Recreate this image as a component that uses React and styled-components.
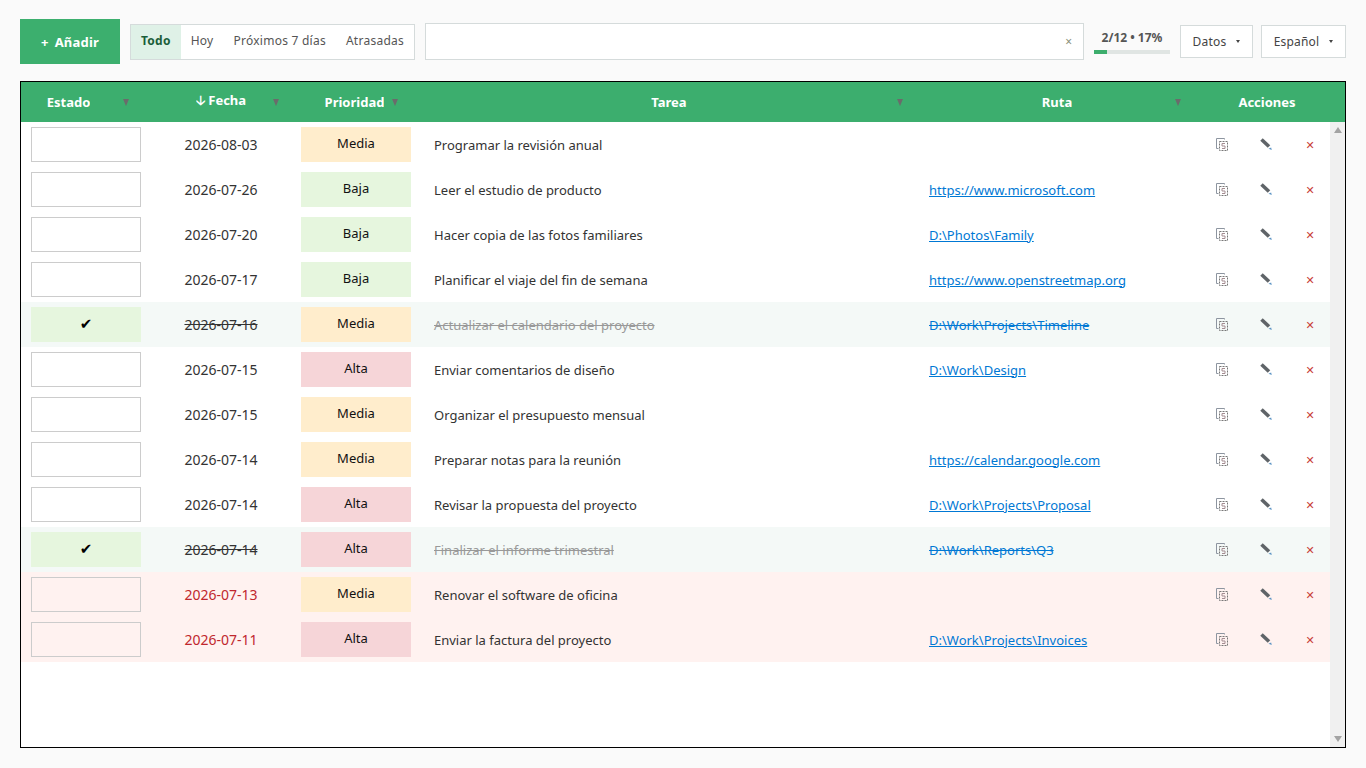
import React from "react";
import styled, { createGlobalStyle } from "styled-components";

const tasks = [
  { done: false, date: "2026-08-03", priority: "Media", title: "Programar la revisión anual", path: "" },
  { done: false, date: "2026-07-26", priority: "Baja", title: "Leer el estudio de producto", path: "https://www.microsoft.com" },
  { done: false, date: "2026-07-20", priority: "Baja", title: "Hacer copia de las fotos familiares", path: "D:\\Photos\\Family" },
  { done: false, date: "2026-07-17", priority: "Baja", title: "Planificar el viaje del fin de semana", path: "https://www.openstreetmap.org" },
  { done: true, date: "2026-07-16", priority: "Media", title: "Actualizar el calendario del proyecto", path: "D:\\Work\\Projects\\Timeline" },
  { done: false, date: "2026-07-15", priority: "Alta", title: "Enviar comentarios de diseño", path: "D:\\Work\\Design" },
  { done: false, date: "2026-07-15", priority: "Media", title: "Organizar el presupuesto mensual", path: "" },
  { done: false, date: "2026-07-14", priority: "Media", title: "Preparar notas para la reunión", path: "https://calendar.google.com" },
  { done: false, date: "2026-07-14", priority: "Alta", title: "Revisar la propuesta del proyecto", path: "D:\\Work\\Projects\\Proposal" },
  { done: true, date: "2026-07-14", priority: "Alta", title: "Finalizar el informe trimestral", path: "D:\\Work\\Reports\\Q3" },
  { overdue: true, date: "2026-07-13", priority: "Media", title: "Renovar el software de oficina", path: "" },
  { overdue: true, date: "2026-07-11", priority: "Alta", title: "Enviar la factura del proyecto", path: "D:\\Work\\Projects\\Invoices" },
];

const priorityColors = { Alta: "#f6d5d8", Media: "#ffedcc", Baja: "#e6f6de" };

const GlobalStyle = createGlobalStyle`
  html, body {
    margin: 0;
    height: 100%;
    background: #fafafa;
    font-family: "Noto Sans", "Open Sans", sans-serif;
    font-size: 13px;
    color: #333;
  }
  * { box-sizing: border-box; }
`;

const Page = styled.div`
  height: 768px;
  padding: 19px 20px 20px;
  display: flex;
  flex-direction: column;
  gap: 17px;
  overflow: hidden;
`;

const Toolbar = styled.div`
  display: flex;
  align-items: center;
  height: 45px;
`;

const AddButton = styled.button`
  width: 100px;
  height: 45px;
  margin-right: 10px;
  border: none;
  background: #3caf6e;
  color: #fff;
  font: 700 13px "Noto Sans", sans-serif;
  letter-spacing: 0.2px;
  display: flex;
  align-items: center;
  justify-content: center;
  gap: 6px;
`;

const Tabs = styled.div`
  display: flex;
  height: 36px;
  margin-right: 10px;
  border: 1px solid #d5dbdb;
  background: #fff;
`;

const Tab = styled.div`
  padding: 0 10px;
  display: flex;
  align-items: center;
  padding-bottom: 2px;
  font-size: 12px;
  letter-spacing: 0.25px;
  color: ${(p) => (p.$active ? "#1b5e3a" : "#555")};
  font-weight: ${(p) => (p.$active ? 700 : 400)};
  background: ${(p) => (p.$active ? "#dff1e7" : "transparent")};
`;

const Search = styled.div`
  width: 659px;
  height: 37px;
  margin-right: 10px;
  border: 1px solid #d5dbdb;
  background: #fff;
  display: flex;
  align-items: center;
  justify-content: flex-end;
  padding-right: 11px;
  color: #8a8f7a;
  font-size: 12px;
`;

const Progress = styled.div`
  width: 76px;
  margin-right: 10px;
  display: flex;
  flex-direction: column;
  gap: 4px;
`;

const ProgressLabel = styled.div`
  font-size: 12px;
  font-weight: 700;
  color: #555;
  text-align: center;
  line-height: 17px;
`;

const ProgressTrack = styled.div`
  height: 4px;
  background: #e0e5e3;
`;

const ProgressFill = styled.div`
  height: 100%;
  background: #3cad6c;
`;

const Dropdown = styled.div`
  height: 33px;
  width: ${(p) => p.$width}px;
  margin-left: ${(p) => p.$gap || 0}px;
  border: 1px solid #d5dbdb;
  background: #fff;
  display: flex;
  align-items: center;
  justify-content: center;
  gap: 10px;
  font-size: 12px;
  letter-spacing: 0.2px;
  color: #444;
`;

const Caret = styled.span`
  width: 0;
  height: 0;
  border-left: 2.5px solid transparent;
  border-right: 2.5px solid transparent;
  border-top: 3px solid #444;
`;

const Grid = styled.div`
  flex: 1;
  min-height: 0;
  border: 1px solid #000;
  background: #fff;
  display: flex;
  flex-direction: column;
`;

const Header = styled.div`
  height: 40px;
  flex: none;
  display: grid;
  grid-template-columns: 130px 140px 130px 496px 280px 1fr;
  background: #3cae6e;
  color: #fff;
  font-weight: 700;
  font-size: 13px;
`;

const HeadCell = styled.div`
  position: relative;
  display: flex;
  align-items: center;
  justify-content: center;
  padding: 0 ${(p) => p.$pad ?? 35}px 0 ${(p) => p.$left ?? 0}px;
`;

const HeadText = styled.span`
  display: block;
  overflow: hidden;
  white-space: nowrap;
`;

const SortMark = styled.span`
  position: absolute;
  top: 17px;
  right: ${(p) => p.$right}px;
  width: 0;
  height: 0;
  border-left: 3.5px solid transparent;
  border-right: 3.5px solid transparent;
  border-top: 7px solid #6b6b6b;
`;

const Body = styled.div`
  flex: 1;
  min-height: 0;
  display: flex;
`;

const Rows = styled.div`
  flex: 1;
  min-width: 0;
`;

const Row = styled.div`
  height: 45px;
  display: grid;
  grid-template-columns: 130px 140px 130px 496px 280px 1fr;
  align-items: center;
  background: ${(p) => (p.$overdue ? "#fff2f0" : p.$done ? "#f4f9f7" : "transparent")};
`;

const StatusBox = styled.div`
  width: 110px;
  height: 35px;
  margin: -1px 0 0 10px;
  display: flex;
  align-items: center;
  justify-content: center;
  font-family: "DejaVu Sans", sans-serif;
  font-size: 15px;
  color: #000;
  border: ${(p) => (p.$done ? "none" : "1px solid #ccc")};
  background: ${(p) => (p.$done ? "#e6f6de" : "transparent")};
`;

const DateCell = styled.div`
  text-align: center;
  font-size: 14px;
  color: ${(p) => (p.$overdue ? "#c0272d" : "#333")};
  text-decoration: ${(p) => (p.$done ? "line-through" : "none")};
`;

const PriorityBox = styled.div`
  width: 110px;
  height: 35px;
  margin: -1px 0 0 10px;
  padding-bottom: 3px;
  display: flex;
  align-items: center;
  justify-content: center;
  color: #111;
  background: ${(p) => priorityColors[p.$level]};
`;

const Title = styled.div`
  padding-left: 13px;
  color: ${(p) => (p.$done ? "#999" : "#333")};
  text-decoration: ${(p) => (p.$done ? "line-through" : "none")};
`;

const PathLink = styled.a`
  margin-left: 12px;
  color: #0078d4;
  text-decoration: underline;
  ${(p) => p.$done && "text-decoration: line-through;"}
`;

const Actions = styled.div`
  display: grid;
  grid-template-columns: repeat(3, 44px);
  padding-left: 3px;
  justify-items: center;
  align-items: center;
`;

const CloseIcon = styled.span`
  font-family: "DejaVu Sans", sans-serif;
  font-size: 11px;
  color: #c9403a;
  margin-top: 2px;
`;

const Scrollbar = styled.div`
  width: 15px;
  background: #f0f0f0;
  display: flex;
  flex-direction: column;
  justify-content: space-between;
  align-items: center;
  padding: 5px 0;
`;

const ScrollUp = styled.span`
  width: 0;
  height: 0;
  border-left: 4.5px solid transparent;
  border-right: 4.5px solid transparent;
  border-bottom: 6px solid #a3a3a3;
`;

const ScrollDown = styled(ScrollUp)`
  border-bottom: none;
  border-top: 6px solid #a3a3a3;
`;

const CopyIcon = () => (
  <svg width="12" height="13" viewBox="0 0 12 13" fill="none">
    <path d="M8.5 1.5V.5H.5v10h2" stroke="#8d95a0" />
    <path d="M3.5 3.5h8v9h-8z" stroke="#777" strokeDasharray="2 1" />
    <path d="M9 5.5H6v2.5h3v2.5H6" stroke="#a58d92" />
  </svg>
);

const PencilIcon = () => (
  <svg width="14" height="13" viewBox="0 0 14 13" fill="none">
    <path d="M2.5 1.5l7.5 7" stroke="#5f6468" strokeWidth="3.6" />
    <path d="M9.5 10.8l2.6-1.2.7 2.4z" fill="#5b93c4" />
  </svg>
);

const App = () => {
  return (
    <Page>
      <GlobalStyle />
      <Toolbar>
        <AddButton>
          <span>+</span>
          <span>Añadir</span>
        </AddButton>
        <Tabs>
          <Tab $active>Todo</Tab>
          <Tab>Hoy</Tab>
          <Tab>Próximos 7 días</Tab>
          <Tab>Atrasadas</Tab>
        </Tabs>
        <Search>×</Search>
        <Progress>
          <ProgressLabel>2/12 • 17%</ProgressLabel>
          <ProgressTrack>
            <ProgressFill style={{ width: `${(2 / 12) * 100}%` }} />
          </ProgressTrack>
        </Progress>
        <Dropdown $width={73}>
          Datos <Caret />
        </Dropdown>
        <Dropdown $width={85} $gap={8}>
          Español <Caret />
        </Dropdown>
      </Toolbar>

      <Grid>
        <Header>
          <HeadCell>
            <HeadText>Estado</HeadText>
            <SortMark $right={22} />
          </HeadCell>
          <HeadCell $pad={0}>
            <HeadText>🡣 Fecha</HeadText>
            <SortMark $right={12} />
          </HeadCell>
          <HeadCell $pad={36} $left={33}>
            <HeadText>Prioridad</HeadText>
            <SortMark $right={23} />
          </HeadCell>
          <HeadCell $pad={0}>
            <HeadText>Tarea</HeadText>
            <SortMark $right={14} />
          </HeadCell>
          <HeadCell $pad={0}>
            <HeadText>Ruta</HeadText>
            <SortMark $right={16} />
          </HeadCell>
          <HeadCell $pad={8}>
            <HeadText>Acciones</HeadText>
          </HeadCell>
        </Header>
        <Body>
          <Rows>
            {tasks.map((t, idx) => (
              <Row key={idx} $done={t.done} $overdue={t.overdue}>
                <StatusBox $done={t.done}>{t.done ? "✔" : ""}</StatusBox>
                <DateCell $done={t.done} $overdue={t.overdue}>
                  {t.date}
                </DateCell>
                <PriorityBox $level={t.priority}>{t.priority}</PriorityBox>
                <Title $done={t.done}>{t.title}</Title>
                <div>
                  {t.path && <PathLink $done={t.done}>{t.path}</PathLink>}
                </div>
                <Actions>
                  <CopyIcon />
                  <PencilIcon />
                  <CloseIcon>✕</CloseIcon>
                </Actions>
              </Row>
            ))}
          </Rows>
          <Scrollbar>
            <ScrollUp />
            <ScrollDown />
          </Scrollbar>
        </Body>
      </Grid>
    </Page>
  );
};

export default App;
